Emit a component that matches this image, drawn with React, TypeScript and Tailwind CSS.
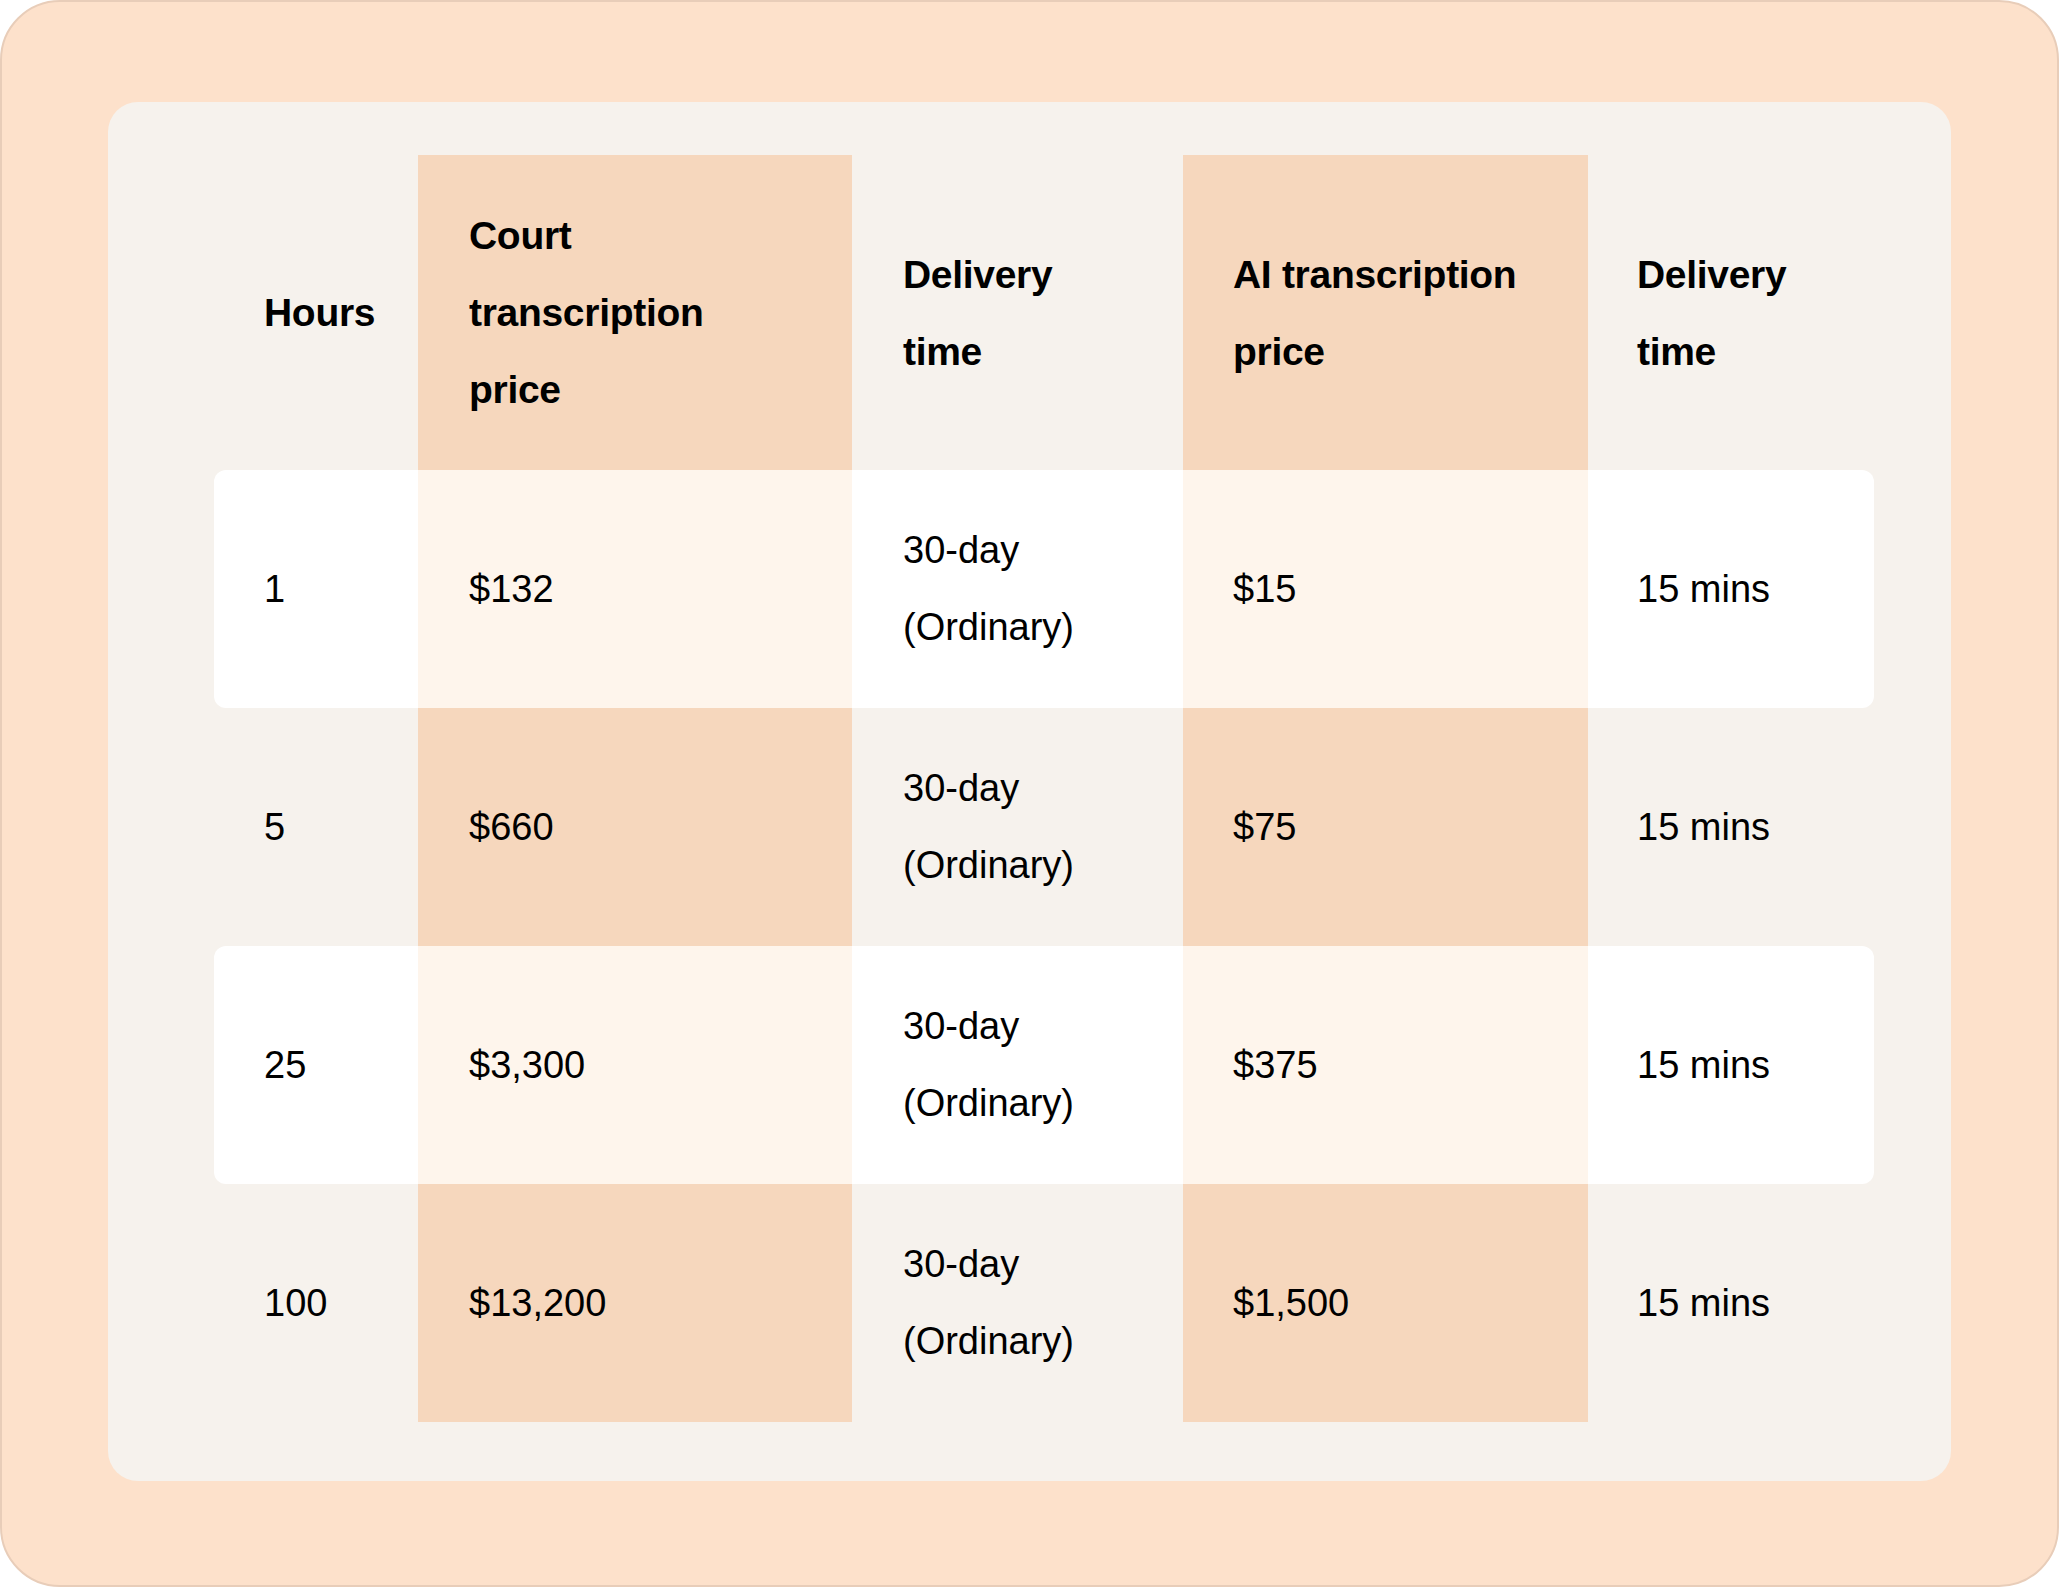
import React from "react";

type Row = { h: string; court: string; ai: string };

const rows: Row[] = [
  { h: "1", court: "$132", ai: "$15" },
  { h: "5", court: "$660", ai: "$75" },
  { h: "25", court: "$3,300", ai: "$375" },
  { h: "100", court: "$13,200", ai: "$1,500" },
];

export default function App() {
  return (
    <div
      className="w-[2059px] h-[1587px] bg-white text-black"
      style={{ fontFamily: '"Liberation Sans", Arial, sans-serif' }}
    >
      <div className="w-full h-full rounded-[60px] border-2 border-[#e8cdb9] bg-[#fde1cb] pt-[100px] pb-[104px] px-[106px]">
        <div className="w-full h-full rounded-[30px] bg-[#f6f2ed] pt-[53px] pl-[106px] pr-[74px] pb-[57px]">
          <div className="flex flex-col w-[1660px]">
            <div className="flex h-[315px] text-[39px] leading-[77px] font-bold tracking-[-0.3px]">
              <div className="w-[204px] pl-[50px] flex items-center">Hours</div>
              <div className="w-[434px] pl-[51px] flex items-center bg-[#f6d7bd]">
                <div>
                  Court
                  <br />
                  transcription
                  <br />
                  price
                </div>
              </div>
              <div className="w-[331px] pl-[51px] flex items-center">
                <div>
                  Delivery
                  <br />
                  time
                </div>
              </div>
              <div className="w-[405px] pl-[50px] flex items-center bg-[#f6d7bd]">
                <div>
                  AI transcription
                  <br />
                  price
                </div>
              </div>
              <div className="w-[286px] pl-[49px] flex items-center">
                <div>
                  Delivery
                  <br />
                  time
                </div>
              </div>
            </div>
            {rows.map((r, i) => {
              const white = i % 2 === 0;
              const shade = white ? "bg-[#fef5ec]" : "bg-[#f6d7bd]";
              return (
                <div
                  key={r.h}
                  className={
                    "flex h-[238px] text-[38px] leading-[77px] font-normal " +
                    (white ? "bg-white rounded-[12px]" : "")
                  }
                >
                  <div className="w-[204px] pl-[50px] flex items-center">{r.h}</div>
                  <div className={"w-[434px] pl-[51px] flex items-center " + shade}>{r.court}</div>
                  <div className="w-[331px] pl-[51px] flex items-center">
                    <div>
                      30-day
                      <br />
                      (Ordinary)
                    </div>
                  </div>
                  <div className={"w-[405px] pl-[50px] flex items-center " + shade}>{r.ai}</div>
                  <div className="w-[286px] pl-[49px] flex items-center">15 mins</div>
                </div>
              );
            })}
          </div>
        </div>
      </div>
    </div>
  );
}
